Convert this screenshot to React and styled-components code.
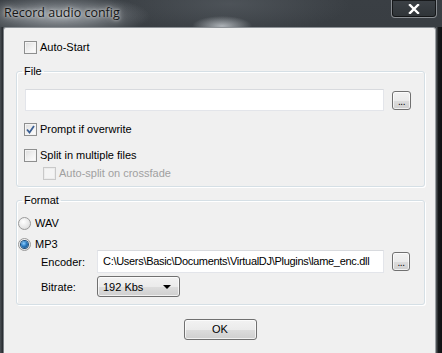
import React from 'react';
import styled, { createGlobalStyle } from 'styled-components';

const Global = createGlobalStyle`
    html, body {
        margin: 0;
        padding: 0;
        background: #1b1e21;
    }
`;

const Window = styled.div`
    width: 442px;
    height: 353px;
    display: flex;
    flex-direction: column;
    overflow: hidden;
    font-family: "Liberation Sans", Arial, sans-serif;
    background:
        radial-gradient(ellipse 90px 22px at 60px 16px, rgba(170, 176, 182, 0.85), rgba(170, 176, 182, 0) 100%),
        radial-gradient(ellipse 30px 10px at 222px 26px, rgba(220, 225, 230, 0.7), rgba(220, 225, 230, 0) 100%),
        radial-gradient(ellipse 120px 30px at 230px 4px, rgba(90, 96, 102, 0.6), rgba(90, 96, 102, 0) 100%),
        linear-gradient(180deg, #3a3f44 0%, #2c3135 100%);
`;

const TitleBar = styled.div`
    height: 27px;
    flex: none;
    display: flex;
    align-items: flex-start;
    justify-content: space-between;
`;

const Title = styled.div`
    margin: 4px 0 0 4px;
    font-family: "Open Sans", "Liberation Sans", sans-serif;
    font-size: 12.5px;
    line-height: 18px;
    color: #151515;
    text-shadow: 0 0 7px rgba(255, 255, 255, 0.85), 0 0 3px rgba(255, 255, 255, 0.7);
`;

const CloseButton = styled.div`
    width: 46px;
    height: 18px;
    margin-right: 5px;
    box-sizing: border-box;
    border: 1px solid rgba(200, 205, 210, 0.55);
    border-top: none;
    border-radius: 0 0 4px 4px;
    background: linear-gradient(180deg, #3c4146 0%, #2f3438 100%);
    box-shadow: inset 0 0 0 1px rgba(0, 0, 0, 0.6);
    display: flex;
    align-items: center;
    justify-content: center;
`;

const Body = styled.div`
    flex: 1;
    display: flex;
`;

const Frame = styled.div`
    width: ${p => p.w}px;
    flex: none;
    background: ${p => p.bg};
`;

const Client = styled.div`
    flex: 1;
    background: #f0f0f0;
    border-top: 1px solid #8d9297;
    border-left: 1px solid #7a7f84;
    border-right: 1px solid #9ea2a6;
    border-radius: 3px 3px 0 0;
    display: flex;
    flex-direction: column;
    padding: 13px 10px 0 12px;
    font-size: 11px;
    color: #000;
`;

const Row = styled.div`
    display: flex;
    align-items: center;
    margin-left: ${p => p.indent || 0}px;
    margin-top: ${p => p.top || 0}px;
`;

const Label = styled.span`
    font-size: 11px;
    line-height: 13px;
    color: ${p => (p.disabled ? '#a0a0a0' : '#000')};
    margin-left: ${p => (p.gap === undefined ? 3 : p.gap)}px;
    white-space: nowrap;
`;

const Box = styled.span`
    width: 13px;
    height: 13px;
    box-sizing: border-box;
    flex: none;
    border: 1px solid ${p => (p.disabled ? '#c9c9c9' : '#8e8f8f')};
    background: ${p => (p.disabled
        ? '#f4f4f4'
        : 'linear-gradient(135deg, #dcdcdc 0%, #f0f0f0 50%, #ffffff 100%)')};
    box-shadow: inset 0 0 0 1px ${p => (p.disabled ? '#ececec' : '#f4f4f4')};
    display: flex;
    align-items: center;
    justify-content: center;
`;

const Radio = styled.span`
    width: 13px;
    height: 13px;
    box-sizing: border-box;
    flex: none;
    border-radius: 50%;
    border: 1px solid #9a9a9a;
    background: radial-gradient(circle at 40% 35%, #ffffff 0%, #e6e6e6 60%, #cfcfcf 100%);
    display: flex;
    align-items: center;
    justify-content: center;
`;

const Dot = styled.span`
    width: 7px;
    height: 7px;
    border-radius: 50%;
    background: radial-gradient(circle at 40% 35%, #8fd0ff 0%, #2a7bc2 45%, #0d3e6e 100%);
    box-shadow: 0 0 0 1px #1b4f7e;
`;

const Group = styled.fieldset`
    margin: ${p => p.top}px 0 0 0;
    padding: 0 0 ${p => p.bottom}px 0;
    min-width: 0;
    border: 1px solid #d5dfe5;
    border-radius: 3px;
    box-shadow: inset 1px 1px 0 #ffffff, 1px 1px 0 #ffffff;
`;

const Legend = styled.legend`
    margin-left: 5px;
    padding: 0 2px;
    font-size: 11px;
    line-height: 14px;
    color: #000;
`;

const TextField = styled.div`
    box-sizing: border-box;
    width: ${p => p.w}px;
    height: ${p => p.h}px;
    background: #fff;
    border: 1px solid #e3e5ea;
    border-top-color: #d8dade;
    font-size: 11px;
    line-height: ${p => p.h - 2}px;
    letter-spacing: ${p => p.tight ? -0.3 : 0}px;
    padding-left: 5px;
    white-space: nowrap;
    overflow: hidden;
`;

const DotsButton = styled.div`
    box-sizing: border-box;
    flex: none;
    width: ${p => p.w}px;
    height: 19px;
    margin-left: ${p => p.gap}px;
    border: 1px solid #707070;
    border-radius: 3px;
    background: linear-gradient(180deg, #f2f2f2 0%, #ebebeb 50%, #dddddd 51%, #cfcfcf 100%);
    box-shadow: inset 0 0 0 1px rgba(255, 255, 255, 0.7);
    font-size: 10px;
    line-height: 20px;
    text-align: center;
    color: #000;
    letter-spacing: -0.5px;
`;

const FieldLabel = styled.span`
    width: 56px;
    font-size: 11px;
    color: #000;
`;

const Select = styled.div`
    box-sizing: border-box;
    width: 83px;
    height: 21px;
    border: 1px solid #707070;
    border-radius: 3px;
    background: linear-gradient(180deg, #f2f2f2 0%, #ebebeb 50%, #dddddd 51%, #cfcfcf 100%);
    box-shadow: inset 0 0 0 1px rgba(255, 255, 255, 0.7);
    display: flex;
    align-items: center;
    justify-content: space-between;
    padding: 0 8px 0 5px;
    font-size: 11px;
`;

const Arrow = styled.span`
    width: 0;
    height: 0;
    border-left: 4px solid transparent;
    border-right: 4px solid transparent;
    border-top: 4px solid #000;
`;

const OkButton = styled.div`
    align-self: center;
    margin: 14px 0 0 -1px;
    box-sizing: border-box;
    width: 73px;
    height: 21px;
    border: 1px solid #707070;
    border-radius: 3px;
    background: linear-gradient(180deg, #f2f2f2 0%, #ebebeb 50%, #dddddd 51%, #cfcfcf 100%);
    box-shadow: inset 0 0 0 1px rgba(255, 255, 255, 0.7);
    font-size: 11px;
    line-height: 19px;
    text-align: center;
`;

const Check = () => (
    <svg width="9" height="9" viewBox="0 0 9 9">
        <path d="M1 4.5 L3.5 7.5 L8 1" fill="none" stroke="#3b5f93" strokeWidth="1.8" />
    </svg>
);

const CheckBox = ({ checked, disabled, label, indent, top }) => (
    <Row indent={indent} top={top}>
        <Box disabled={disabled}>{checked && <Check />}</Box>
        <Label disabled={disabled}>{label}</Label>
    </Row>
);

const RadioOption = ({ checked, label, top }) => (
    <Row indent={1} top={top}>
        <Radio>{checked && <Dot />}</Radio>
        <Label gap={4}>{label}</Label>
    </Row>
);

const App = () => (
    <Window>
        <Global />
        <TitleBar>
            <Title>Record audio config</Title>
            <CloseButton>
                <svg width="12" height="10" viewBox="0 0 12 10">
                    <path d="M2 1 L10 9 M10 1 L2 9" stroke="#fff" strokeWidth="2.4" strokeLinecap="square" />
                </svg>
            </CloseButton>
        </TitleBar>
        <Body>
            <Frame w={3} bg="linear-gradient(90deg, #4a4f54, #25292d)" />
            <Client>
                <CheckBox label="Auto-Start" indent={8} />

                <Group top={10} bottom={6}>
                    <Legend>File</Legend>
                    <Row indent={8} top={11}>
                        <TextField w={359} h={22} />
                        <DotsButton w={19} gap={8}>...</DotsButton>
                    </Row>
                    <CheckBox checked label="Prompt if overwrite" indent={7} top={12} />
                    <CheckBox label="Split in multiple files" indent={7} top={13} />
                    <CheckBox disabled label="Auto-split on crossfade" indent={26} top={5} />
                </Group>

                <Group top={6} bottom={7}>
                    <Legend>Format</Legend>
                    <RadioOption label="WAV" top={10} />
                    <RadioOption checked label="MP3" top={8} />
                    <Row indent={24} top={-1}>
                        <FieldLabel>Encoder:</FieldLabel>
                        <TextField w={287} h={23} tight>C:\Users\Basic\Documents\VirtualDJ\Plugins\lame_enc.dll</TextField>
                        <DotsButton w={18} gap={8}>...</DotsButton>
                    </Row>
                    <Row indent={24} top={3}>
                        <FieldLabel>Bitrate:</FieldLabel>
                        <Select>
                            <span>192 Kbs</span>
                            <Arrow />
                        </Select>
                    </Row>
                </Group>

                <OkButton>OK</OkButton>
            </Client>
            <Frame w={6} bg="linear-gradient(90deg, #5a5e62, #16191b 40%, #0f1113)" />
        </Body>
    </Window>
);

export default App;
